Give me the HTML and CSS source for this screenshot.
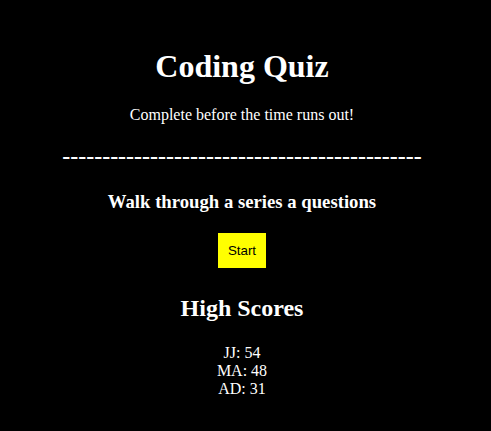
FILE: index.html
```html
<!DOCTYPE html>
<html>
<head>
<meta charset="utf-8">
<link rel="stylesheet" href="styles.css">
</head>
<body>
<main class="quiz">
  <h1 class="title">Coding Quiz</h1>
  <p class="subtitle">Complete before the time runs out!</p>
  <h2 class="divider">---------------------------------------------</h2>
  <h3 class="intro">Walk through a series a questions</h3>
  <div class="actions"><button class="start">Start</button></div>
  <h2 class="scores-title">High Scores</h2>
  <ul class="scores">
    <li>JJ: 54</li>
    <li>MA: 48</li>
    <li>AD: 31</li>
  </ul>
</main>
</body>
</html>
```
FILE: styles.css
```css
html, body {
  background: #000;
}
body {
  margin: 8px;
  color: #fff;
  font-family: "Liberation Serif", serif;
}
.quiz {
  text-align: center;
  padding: 40px 7px 0 0;
}
.title {
  font-size: 32px;
  line-height: 37px;
  margin: 0;
}
.subtitle {
  font-size: 16px;
  line-height: 18px;
  margin: 21px 0 0;
}
.divider {
  font-size: 24px;
  line-height: 28px;
  font-weight: bold;
  margin: 18px 0 0;
}
.intro {
  font-size: 18.72px;
  line-height: 22px;
  margin: 21px 0 0;
}
.actions {
  margin-top: 20px;
}
.start {
  display: inline-block;
  background: #ff0;
  border: none;
  color: #000;
  font-family: "Liberation Sans", sans-serif;
  font-size: 13.33px;
  line-height: 15px;
  padding: 10px 10px;
  margin: 0;
}
.scores-title {
  font-size: 24px;
  line-height: 28px;
  margin: 26px 0 0;
}
.scores {
  list-style: none;
  padding: 0;
  margin: 22px 0 0;
  font-size: 16px;
  line-height: 18px;
}
```
